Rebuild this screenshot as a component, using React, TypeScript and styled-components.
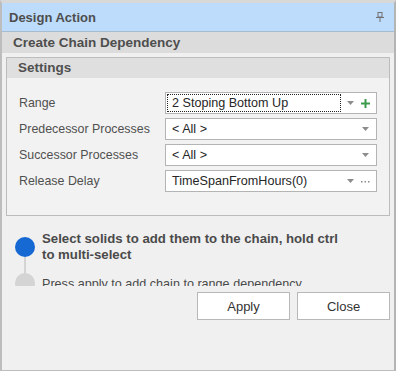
import React from "react";
import styled, { createGlobalStyle } from "styled-components";

const GlobalStyle = createGlobalStyle`
  html, body {
    margin: 0;
    padding: 0;
    background: #ffffff;
  }
  body {
    font-family: "Liberation Sans", Arial, sans-serif;
    color: #4a4a4a;
  }
`;

interface IRow {
  label: string;
  value: string;
  focused?: boolean;
  extra?: "add" | "more";
}

const rows: IRow[] = [
  { label: "Range", value: "2 Stoping Bottom Up", focused: true, extra: "add" },
  { label: "Predecessor Processes", value: "< All >" },
  { label: "Successor Processes", value: "< All >" },
  { label: "Release Delay", value: "TimeSpanFromHours(0)", extra: "more" },
];

const steps = [
  {
    text: "Select solids to add them to the chain, hold ctrl to multi-select",
    active: true,
  },
  { text: "Press apply to add chain to range dependency", active: false },
];

const PinIcon = () => (
  <svg width="8" height="10" viewBox="0 0 8 10">
    <rect x="2" y="0.5" width="4" height="4.5" fill="none" stroke="#707070" />
    <rect x="0" y="5" width="8" height="1" fill="#707070" />
    <rect x="3.5" y="6" width="1" height="4" fill="#707070" />
  </svg>
);

const DropArrow = () => (
  <svg width="7" height="4" viewBox="0 0 7 4">
    <path d="M0 0h7L3.5 4z" fill="#8c8c8c" />
  </svg>
);

const PlusIcon = () => (
  <svg width="9" height="9" viewBox="0 0 9 9">
    <rect x="3.5" y="0" width="2" height="9" fill="#3c9a4c" />
    <rect x="0" y="3.5" width="9" height="2" fill="#3c9a4c" />
  </svg>
);

const MoreIcon = () => (
  <svg width="9" height="3" viewBox="0 0 9 3">
    <rect x="0" y="1" width="1.5" height="1.5" fill="#8c8c8c" />
    <rect x="3.5" y="1" width="1.5" height="1.5" fill="#8c8c8c" />
    <rect x="7" y="1" width="1.5" height="1.5" fill="#8c8c8c" />
  </svg>
);

export default function App() {
  return (
    <>
      <GlobalStyle />
      <Frame>
        <TitleBar>
          <Title>Design Action</Title>
          <PinIcon />
        </TitleBar>
        <SubHeader>Create Chain Dependency</SubHeader>
        <Body>
          <Group>
            <GroupHeader>Settings</GroupHeader>
            <GroupContent>
              {rows.map(row => (
                <Row key={row.label}>
                  <Label>{row.label}</Label>
                  <Combo>
                    <ComboText focused={row.focused}>{row.value}</ComboText>
                    <ComboButton>
                      <DropArrow />
                    </ComboButton>
                    {row.extra && (
                      <ComboButton>
                        {row.extra === "add" ? <PlusIcon /> : <MoreIcon />}
                      </ComboButton>
                    )}
                  </Combo>
                </Row>
              ))}
            </GroupContent>
          </Group>

          <Steps>
            {steps.map((step, i) => (
              <Step key={i}>
                <Marker active={step.active} last={i === steps.length - 1} />
                <StepText active={step.active}>{step.text}</StepText>
              </Step>
            ))}
          </Steps>

          <Buttons>
            <Button>Apply</Button>
            <Button>Close</Button>
          </Buttons>
        </Body>
      </Frame>
    </>
  );
}

const Frame = styled.div`
  box-sizing: border-box;
  width: 396px;
  height: 371px;
  border: 1px solid #bdbdbd;
  border-left-width: 2px;
  border-right: 2px solid #b4b4b4;
  border-top: 3px solid #d8d8d8;
  background: #f0f0f0;
  display: flex;
  flex-direction: column;
`;

const TitleBar = styled.div`
  height: 28px;
  background: #bddcfb;
  border-bottom: 1px solid #a8bccf;
  display: flex;
  align-items: center;
  justify-content: space-between;
  padding: 0 10px 0 7px;
  flex-shrink: 0;
`;

const Title = styled.div`
  font-weight: bold;
  font-size: 13px;
  color: #4e4e4e;
`;

const SubHeader = styled.div`
  height: 21px;
  background: #dcdcdc;
  font-weight: bold;
  font-size: 13.5px;
  color: #4e4e4e;
  padding-left: 11px;
  line-height: 21px;
  flex-shrink: 0;
`;

const Body = styled.div`
  padding: 4px 4px 0 4px;
  display: flex;
  flex-direction: column;
`;

const Group = styled.div`
  border: 1px solid #bcbcbc;
  background: #f2f2f2;
`;

const GroupHeader = styled.div`
  height: 20px;
  line-height: 20px;
  background: #dfdfdf;
  font-weight: bold;
  font-size: 13.5px;
  color: #505050;
  padding-left: 11px;
`;

const GroupContent = styled.div`
  padding: 14px 12px 23px 12px;
  display: flex;
  flex-direction: column;
  gap: 4px;
`;

const Row = styled.div`
  display: flex;
  align-items: center;
  height: 22px;
`;

const Label = styled.div`
  width: 146px;
  font-size: 12.4px;
  color: #505050;
`;

const Combo = styled.div`
  flex: 1;
  box-sizing: border-box;
  height: 22px;
  background: #ffffff;
  border: 1px solid #b4b4b4;
  display: flex;
  align-items: center;
  padding: 1px 3px 1px 1px;
`;

const ComboText = styled.div<{ focused?: boolean }>`
  flex: 1;
  align-self: stretch;
  display: flex;
  align-items: center;
  padding-left: 4px;
  margin-right: 2px;
  font-size: 12.6px;
  color: #262626;
  border: 1px dotted ${p => (p.focused ? "#222222" : "transparent")};
`;

const ComboButton = styled.div`
  width: 15px;
  display: flex;
  align-items: center;
  justify-content: center;
`;

const Steps = styled.div`
  margin-top: 15px;
  height: 55px;
  overflow: hidden;
  padding-left: 9px;
  display: flex;
  flex-direction: column;
  gap: 12px;
`;

const Step = styled.div`
  display: flex;
  align-items: center;
  gap: 7px;
`;

const Marker = styled.div<{ active: boolean; last: boolean }>`
  position: relative;
  flex-shrink: 0;
  width: 20px;
  height: 20px;
  border-radius: 50%;
  background: ${p => (p.active ? "#1668d2" : "#d4d4d4")};
  margin-top: ${p => (p.last ? "-2px" : "0")};

  &::after {
    content: "";
    display: ${p => (p.last ? "none" : "block")};
    position: absolute;
    left: 9px;
    top: 20px;
    width: 2px;
    height: 18px;
    background: #d4d4d4;
  }
`;

const StepText = styled.div<{ active: boolean }>`
  width: 308px;
  font-size: ${p => (p.active ? "13.2px" : "12.6px")};
  font-weight: ${p => (p.active ? "bold" : "normal")};
  line-height: 16px;
  color: #4a4a4a;
`;

const Buttons = styled.div`
  margin-top: 6px;
  display: flex;
  justify-content: flex-end;
  gap: 7px;
`;

const Button = styled.button`
  width: 93px;
  height: 28px;
  background: #ffffff;
  border: 1px solid #b8b8b8;
  font-family: "Liberation Sans", Arial, sans-serif;
  font-size: 13px;
  color: #333333;
  padding: 0;
`;
